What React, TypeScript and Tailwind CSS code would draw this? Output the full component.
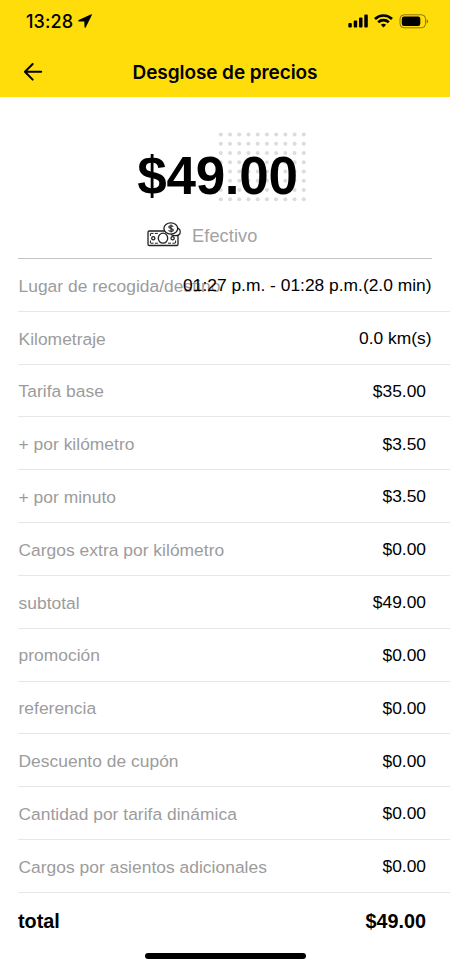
interface PriceRow {
  label: string;
  value: string;
  wide?: boolean;
}

const rows: PriceRow[] = [
  { label: 'Lugar de recogida/destino', value: '01:27 p.m. - 01:28 p.m.(2.0 min)', wide: true },
  { label: 'Kilometraje', value: '0.0 km(s)', wide: true },
  { label: 'Tarifa base', value: '$35.00' },
  { label: '+ por kilómetro', value: '$3.50' },
  { label: '+ por minuto', value: '$3.50' },
  { label: 'Cargos extra por kilómetro', value: '$0.00' },
  { label: 'subtotal', value: '$49.00' },
  { label: 'promoción', value: '$0.00' },
  { label: 'referencia', value: '$0.00' },
  { label: 'Descuento de cupón', value: '$0.00' },
  { label: 'Cantidad por tarifa dinámica', value: '$0.00' },
  { label: 'Cargos por asientos adicionales', value: '$0.00' },
];

function StatusBar() {
  return (
    <div className="flex h-[42px] items-center justify-between pl-[26px] pr-[21px]">
      <div className="flex items-center gap-[5px]">
        <span className="pt-[2px] text-[18px] leading-none font-medium tracking-[0.1px]">13:28</span>
        <svg className="h-[14px] w-[14px]" viewBox="0 0 14 14" fill="currentColor">
          <path d="M13.3 0.2 L0.7 6.1 C0 6.5 0.2 7.4 0.9 7.4 L6.3 7.5 L6.5 13 C6.5 13.8 7.4 14 7.8 13.2 L13.9 0.9 C14.1 0.4 13.8 0 13.3 0.2 Z" />
        </svg>
      </div>
      <div className="flex items-center gap-[6px]">
        <svg className="h-[14px] w-[21px]" viewBox="0 0 21 14" fill="currentColor">
          <rect x="1.3" y="9" width="3.5" height="4.4" rx="1" />
          <rect x="6.7" y="6.6" width="3.5" height="6.8" rx="1" />
          <rect x="12" y="3.6" width="3.5" height="9.8" rx="1" />
          <rect x="17.3" y="0.5" width="3.5" height="12.9" rx="1" />
        </svg>
        <svg className="h-[14px] w-[19px]" viewBox="0 0 19 14" fill="none" stroke="currentColor" strokeWidth="2.7">
          <path d="M1 5 C5.8 0.3 13.2 0.3 18 5" />
          <path d="M4.2 8.3 C7.2 5.5 11.8 5.5 14.8 8.3" />
          <path d="M9.5 13.4 L6.9 10.8 C8.4 9.5 10.6 9.5 12.1 10.8 Z" fill="currentColor" stroke="none" />
        </svg>
        <svg className="h-[15px] w-[30px]" viewBox="0 0 30 15" fill="currentColor">
          <rect x="1" y="0.8" width="25.5" height="13" rx="4" fill="none" stroke="currentColor" strokeOpacity="0.45" />
          <rect x="2.8" y="2.6" width="18.5" height="9.4" rx="2.2" />
          <path d="M27.7 5 C29.5 5.8 29.5 8.8 27.7 9.6 Z" opacity="0.5" />
        </svg>
      </div>
    </div>
  );
}

function CashIcon() {
  return (
    <svg className="h-[25px] w-[35px]" viewBox="0 0 35 25" fill="none" stroke="#222" strokeWidth="1.3">
      <rect x="1" y="9" width="30" height="14.5" rx="1.2" />
      <path d="M3.5 11.4 H11 M20 11.4 H28.5 M3.5 21.2 H11 M21 21.2 H28.5" strokeDasharray="3 1.4" strokeWidth="1" />
      <path d="M3.4 11.5 V14 M3.4 18.5 V21 M28.6 18.5 V21" strokeWidth="1" />
      <ellipse cx="16" cy="16.2" rx="4.7" ry="5" fill="#fff" />
      <circle cx="6.3" cy="16.2" r="1.6" />
      <circle cx="25.6" cy="16.2" r="1.6" />
      <path d="M24 12.5 C26 14 31.8 14.5 33 11.5 C34.2 8.5 32 6 29.5 5.8" fill="#fff" />
      <ellipse cx="23.8" cy="6.5" rx="6.9" ry="5.6" fill="#fff" />
      <path d="M26.2 4.7 C25.2 3.3 21.8 3.4 21.8 5.1 C21.8 6.9 26.3 6.1 26.3 8 C26.3 9.8 22.4 9.7 21.5 8.2 M24 2.5 V10.6" strokeWidth="1.2" />
    </svg>
  );
}

function DotGrid() {
  return (
    <svg className="absolute top-[34px] left-[199px] h-[72px] w-[92px]" fill="#dcdcdc">
      {Array.from({ length: 80 }, (_, i) => (
        <circle key={i} cx={3.8 + (i % 10) * 9.22} cy={3.4 + Math.floor(i / 10) * 9.26} r="2" />
      ))}
    </svg>
  );
}

export default function App() {
  return (
    <div className="flex h-[960px] w-[450px] flex-col overflow-hidden bg-white font-['Liberation_Sans',Arial,sans-serif] text-black">
      <header className="h-[97px] shrink-0 bg-[#ffdd0a] font-['Inter',sans-serif]">
        <StatusBar />
        <div className="grid h-[60px] grid-cols-[50px_1fr_50px] items-center">
          <button className="pl-[23px]" aria-label="Volver">
            <svg
              className="h-[20px] w-[20px]"
              viewBox="0 0 20 20"
              fill="none"
              stroke="currentColor"
              strokeWidth="2"
              strokeLinecap="round"
              strokeLinejoin="round"
            >
              <path d="M18.2 9.8 H2 M9.7 2 L1.9 9.8 L9.7 17.6" />
            </svg>
          </button>
          <h1 className="text-center text-[19px] leading-none font-semibold tracking-[-0.08px] whitespace-nowrap">
            Desglose de precios
          </h1>
        </div>
      </header>

      {/* Amount and payment method */}
      <section className="relative mx-[18px] h-[162px] shrink-0 border-b-[1.5px] border-[#c4c4c4]">
        <DotGrid />
        <p className="relative pt-[52px] pr-[15px] text-center text-[53px] leading-[53px] font-bold tracking-[-0.3px]">$49.00</p>
        <div className="mt-[20px] flex items-center pl-[129px]">
          <CashIcon />
          <span className="ml-[10px] pt-[3px] text-[18.2px] leading-none tracking-[0.1px] text-[#a3a3a3]">Efectivo</span>
        </div>
      </section>

      <ul className="shrink-0 pl-[18px] text-[17.4px] leading-none">
        {rows.map((row) => (
          <li
            key={row.label}
            className="flex h-[52.82px] items-center border-b-[1.5px] border-[#e6e6e6] pt-[2px] whitespace-nowrap"
          >
            <span className="w-0 flex-1 pt-[1px] pl-[0.5px] tracking-[0.03px] text-[#9c9c9c]">{row.label}</span>
            <span className={row.wide ? 'relative pr-[18.5px]' : 'relative pr-[24px]'}>{row.value}</span>
          </li>
        ))}
      </ul>

      <div className="flex h-[56px] shrink-0 items-center justify-between pt-[2px] pr-[24px] pl-[18px] text-[19.8px] leading-none font-bold">
        <span>total</span>
        <span>$49.00</span>
      </div>
      <div className="mx-auto mt-[4px] h-[6px] w-[161px] shrink-0 rounded-full bg-black" />
    </div>
  );
}
